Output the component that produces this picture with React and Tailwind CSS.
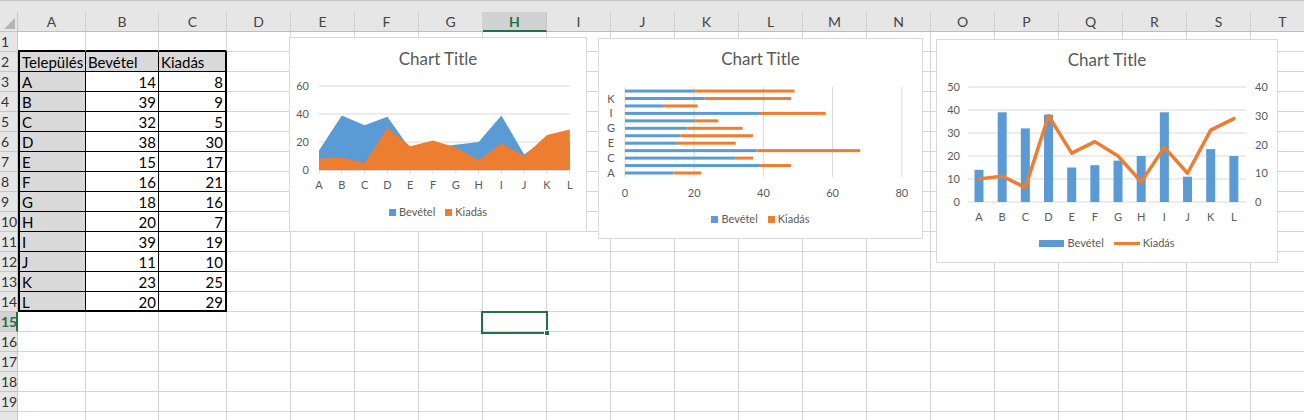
import React from "react";

const BEV = [14, 39, 32, 38, 15, 16, 18, 20, 39, 11, 23, 20];
const KIA = [8, 9, 5, 30, 17, 21, 16, 7, 19, 10, 25, 29];
const CATS = ["A", "B", "C", "D", "E", "F", "G", "H", "I", "J", "K", "L"];

const COLS = [
  { name: "A", w: "w-[68px]" },
  { name: "B", w: "w-[73px]" },
  { name: "C", w: "w-[68px]" },
  ...["D", "E", "F", "G", "H", "I", "J", "K", "L", "M", "N", "O", "P", "Q", "R", "S", "T"].map((n) => ({
    name: n,
    w: "w-[64px]",
  })),
];

// row 20 is only partly visible at the bottom edge, so its number is left off
const ROWS = Array.from({ length: 20 }, (_, i) => i + 1);

const BLUE = "#5b9bd5";
const ORANGE = "#ed7d31";
const GRID = "#d9d9d9";
const LABEL = "#595959";

function cellValue(r, c) {
  if (c > 2) return null;
  if (r === 2) return { text: ["Település", "Bevétel", "Kiadás"][c], right: false };
  if (r >= 3 && r <= 14) {
    const i = r - 3;
    if (c === 0) return { text: CATS[i], right: false };
    return { text: c === 1 ? BEV[i] : KIA[i], right: true };
  }
  return null;
}

function cellClass(r, c) {
  const inTable = r >= 2 && r <= 14 && c <= 2;
  let cls = "h-[20px] shrink-0 border-r border-b overflow-hidden whitespace-nowrap pt-[1px] leading-[19px] text-[15px] text-black ";
  if (inTable) {
    cls += "border-black ";
    if (c === 2) cls += "border-r-2 ";
    if (c === 0) cls += "border-l-2 border-l-black ";
    if (r === 14) cls += "border-b-2 ";
    if (r === 2 || c === 0) cls += "bg-[#d9d9d9] ";
  } else if (r === 1 && c <= 2) {
    cls += "border-r-[#d4d4d4] border-b-2 border-b-black ";
  } else {
    cls += "border-[#d4d4d4] ";
  }
  return cls;
}

function Legend({ line }) {
  return (
    <div className="h-[14px] flex justify-center items-center gap-[10px] text-[11px] leading-[14px] text-[#595959]">
      <div className="flex items-center gap-[3px]">
        <span className={line ? "w-[25px] h-[7px] bg-[#5b9bd5]" : "w-[7px] h-[7px] bg-[#5b9bd5]"} />
        <span>Bevétel</span>
      </div>
      <div className="flex items-center gap-[3px]">
        <span className={line ? "w-[26px] h-[3px] bg-[#ed7d31]" : "w-[7px] h-[7px] bg-[#ed7d31]"} />
        <span>Kiadás</span>
      </div>
    </div>
  );
}

function Title({ className }) {
  return (
    <div className={"h-[20px] leading-[20px] text-center text-[17px] text-[#595959] " + className}>
      Chart Title
    </div>
  );
}

function AreaChart() {
  const y = (v) => 101 - 1.4 * v;
  const x = (i) => 29 + 22.8 * i;
  const area = (vals) =>
    vals.map((v, i) => `${x(i)},${y(v)}`).join(" ") + ` ${x(11)},${y(0)} ${x(0)},${y(0)}`;
  return (
    <div className="absolute left-[289px] top-[37px] w-[298px] h-[195px] bg-white border border-[#d9d9d9] flex flex-col">
      <Title className="mt-[11px]" />
      <svg width="296" height="130" className="block">
        {[20, 40, 60].map((v) => (
          <line key={v} x1={x(0)} x2={x(11)} y1={y(v)} y2={y(v)} stroke={GRID} strokeWidth="1" />
        ))}
        {[0, 20, 40, 60].map((v) => (
          <text key={v} x="19" y={y(v) + 4} textAnchor="end" fontSize="11" fill={LABEL}>
            {v}
          </text>
        ))}
        <polygon points={area(BEV)} fill={BLUE} />
        <polygon points={area(KIA)} fill={ORANGE} />
        <line x1={x(0)} x2={x(11)} y1={y(0) + 0.5} y2={y(0) + 0.5} stroke={GRID} />
        {CATS.map((c, i) => (
          <g key={c}>
            <line x1={x(i)} x2={x(i)} y1={y(0)} y2={y(0) + 4} stroke={GRID} />
            <text x={x(i)} y="120" textAnchor="middle" fontSize="11" fill={LABEL}>
              {c}
            </text>
          </g>
        ))}
      </svg>
      <div className="mt-[6px]">
        <Legend />
      </div>
    </div>
  );
}

function BarChart() {
  const x = (v) => 26 + 3.46 * v;
  const cy = (i) => 104 - 7.45 * i;
  return (
    <div className="absolute left-[598px] top-[38px] w-[325px] h-[201px] bg-white border border-[#d9d9d9] flex flex-col">
      <Title className="mt-[10px]" />
      <svg width="323" height="140" className="block">
        {[0, 20, 40, 60, 80].map((v) => (
          <g key={v}>
            <line x1={x(v)} x2={x(v)} y1="18" y2="108" stroke={GRID} />
            <text x={x(v)} y="128" textAnchor="middle" fontSize="11" fill={LABEL}>
              {v}
            </text>
          </g>
        ))}
        {CATS.map((c, i) => (
          <g key={c}>
            <rect x={x(0)} y={cy(i) - 1.5} width={3.46 * BEV[i]} height="3" fill={BLUE} />
            <rect x={x(BEV[i])} y={cy(i) - 1.5} width={3.46 * KIA[i]} height="3" fill={ORANGE} />
            {i % 2 === 0 && (
              <text x="12" y={cy(i) + 4} textAnchor="middle" fontSize="11" fill={LABEL}>
                {c}
              </text>
            )}
          </g>
        ))}
      </svg>
      <div className="mt-[3px]">
        <Legend />
      </div>
    </div>
  );
}

function ComboChart() {
  const yl = (v) => 132 - 2.3 * v;
  const yr = (v) => 132 - 2.875 * v;
  const cx = (i) => 42 + 23.17 * i;
  return (
    <div className="absolute left-[936px] top-[39px] w-[342px] h-[224px] bg-white border border-[#d9d9d9] flex flex-col">
      <Title className="mt-[10px]" />
      <svg width="340" height="160" className="block">
        {[0, 10, 20, 30, 40, 50].map((v) => (
          <g key={v}>
            <line x1="31" x2="309" y1={yl(v)} y2={yl(v)} stroke={GRID} />
            <text x="23" y={yl(v) + 4} textAnchor="end" fontSize="11" fill={LABEL}>
              {v}
            </text>
          </g>
        ))}
        {[0, 10, 20, 30, 40].map((v) => (
          <text key={v} x="318" y={yr(v) + 4} fontSize="11" fill={LABEL}>
            {v}
          </text>
        ))}
        {CATS.map((c, i) => (
          <g key={c}>
            <rect x={cx(i) - 4.5} y={yl(BEV[i])} width="9" height={2.3 * BEV[i]} fill={BLUE} />
            <text x={cx(i)} y="151" textAnchor="middle" fontSize="11" fill={LABEL}>
              {c}
            </text>
          </g>
        ))}
        <polyline
          points={KIA.map((v, i) => `${cx(i)},${yr(v)}`).join(" ")}
          fill="none"
          stroke={ORANGE}
          strokeWidth="3.5"
          strokeLinejoin="round"
          strokeLinecap="round"
        />
      </svg>
      <div className="mt-[6px]">
        <Legend line />
      </div>
    </div>
  );
}

export default function App() {
  return (
    <div className="relative w-[1304px] h-[420px] overflow-hidden bg-white font-['Lato',sans-serif]">
      <div className="h-[12px] bg-[#e6e6e6] border-t border-[#c6c6c6]" />
      <div className="flex h-[20px]">
        <div className="w-[18px] h-[20px] shrink-0 bg-[#e6e6e6] border-r border-b border-[#c6c6c6] flex items-end justify-end p-[2px]">
          <svg width="11" height="11">
            <polygon points="11,0 11,11 0,11" fill="#b4b4b4" />
          </svg>
        </div>
        {COLS.map((col) => (
          <div
            key={col.name}
            className={
              col.name === "H"
                ? "w-[64px] h-[20px] shrink-0 bg-[#d2d2d2] border-r border-[#c6c6c6] border-b-2 border-b-[#217346] text-center text-[14px] leading-[19px] font-bold text-[#217346]"
                : col.w + " h-[20px] shrink-0 bg-[#e6e6e6] border-r border-b border-[#d0d0d0] border-b-[#bdbdbd] text-center text-[14px] leading-[19px] text-[#444]"
            }
          >
            {col.name}
          </div>
        ))}
      </div>
      {ROWS.map((r) => (
        <div key={r} className="flex h-[20px]">
          <div
            className={
              r === 15
                ? "w-[18px] h-[20px] shrink-0 bg-[#d2d2d2] border-r-2 border-r-[#217346] border-b border-b-[#c6c6c6] text-[14px] leading-[20px] pl-[1px] font-bold text-[#217346]"
                : "w-[18px] h-[20px] shrink-0 bg-[#e6e6e6] border-r border-b border-[#c6c6c6] text-[14px] leading-[20px] pl-[1px] text-[#333]"
            }
          >
            {r < 20 ? r : null}
          </div>
          {COLS.map((col, c) => {
            const val = cellValue(r, c);
            return (
              <div key={col.name} className={col.w + " " + cellClass(r, c) + (val && val.right ? "text-right pr-[2px]" : "pl-[2px]")}>
                {val ? val.text : null}
              </div>
            );
          })}
        </div>
      ))}

      <AreaChart />
      <BarChart />
      <ComboChart />

      <div className="absolute left-[481px] top-[311px] w-[67px] h-[23px] border-2 border-[#217346]" />
      <div className="absolute left-[544px] top-[330px] w-[6px] h-[6px] bg-[#217346] border border-white" />
    </div>
  );
}
